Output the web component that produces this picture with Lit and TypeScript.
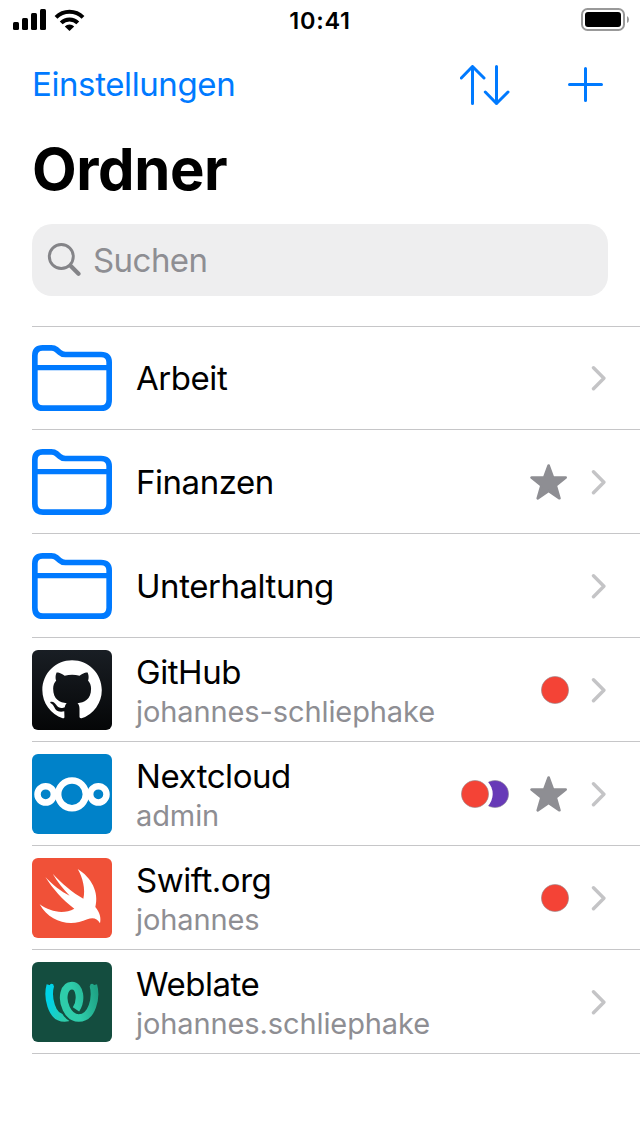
import { LitElement, html, css, svg, nothing } from "lit";
import { customElement, property } from "lit/decorators.js";

type Kind = "folder" | "github" | "nextcloud" | "swift" | "weblate";

interface Entry {
  kind: Kind;
  title: string;
  user?: string;
  tags?: string[];
  starred?: boolean;
}

const RED = "#f44336";
const PURPLE = "#673ab7";

const ENTRIES: Entry[] = [
  { kind: "folder", title: "Arbeit" },
  { kind: "folder", title: "Finanzen", starred: true },
  { kind: "folder", title: "Unterhaltung" },
  { kind: "github", title: "GitHub", user: "johannes-schliephake", tags: [RED] },
  { kind: "nextcloud", title: "Nextcloud", user: "admin", tags: [RED, PURPLE], starred: true },
  { kind: "swift", title: "Swift.org", user: "johannes", tags: [RED] },
  { kind: "weblate", title: "Weblate", user: "johannes.schliephake" },
];

const ART = {
  folder: svg`
    <g fill="none" stroke="#007aff" stroke-width="17" stroke-linejoin="round">
      <path d="M44.5 254V122Q44.5 98.500 68 98.500H94Q103 98.500 109 103.500L119 112Q126 118.500 136 118.500H243Q267.500 118.500 267.500 142V254Q267.500 279.500 243 279.500H69Q44.500 279.500 44.500 254Z"/>
      <path d="M45 158H267" stroke-width="16"/>
    </g>`,
  github: svg`
    <defs><linearGradient id="night" x1="0" y1="0" x2="0" y2="1"><stop offset="0" stop-color="#191e24"/><stop offset="1" stop-color="#050607"/></linearGradient></defs>
    <rect x="24" y="24" width="240" height="240" fill="url(#night)"/>
    <path transform="translate(55 55) scale(11.15)" fill="#fff" d="M8 0C3.58 0 0 3.58 0 8c0 3.54 2.29 6.53 5.47 7.59.28.07.48-.06.48-.34L5.900 13.720C4 14.090 3.470 13.230 3.310 12.780C3.220 12.550 2.830 11.840 2.490 11.650C2.210 11.500 1.810 11.130 2.480 11.120C3.110 11.110 3.560 11.700 3.710 11.940C4.430 13.150 5.580 12.810 6.040 12.600C6.110 12.080 6.320 11.730 6.550 11.530C4.770 11.330 2.910 10.640 2.910 7.580C2.910 6.710 3.220 5.990 3.730 5.430C3.650 5.230 3.370 4.410 3.810 3.310C3.810 3.310 4.480 3.100 6.010 4.130A7.500 7.500 0 0 1 10.010 4.130C11.540 3.090 12.210 3.310 12.210 3.310C12.650 4.410 12.370 5.230 12.290 5.430C12.800 5.990 13.110 6.700 13.110 7.580C13.110 10.650 11.240 11.330 9.460 11.530C9.750 11.780 10 12.260 10 13.010L10 15.210C10 15.460 10.200 15.680 10.560 15.590A8.010 8.010 0 0 0 16 8C16 3.580 12.420 0 8 0Z"/>`,
  nextcloud: svg`
    <rect x="24" y="24" width="240" height="240" fill="#0082c9"/>
    <g fill="none" stroke="#fff" stroke-width="19.5">
      <circle cx="144" cy="145" r="41.5"/><circle cx="65" cy="145" r="24.5"/><circle cx="223" cy="145" r="24.5"/>
    </g>`,
  swift: svg`
    <rect x="24" y="24" width="240" height="240" fill="#f05138"/>
    <path fill="#fff" d="M161 57C202 82 226 127 214 171C227 187 232 203 228 220C219 204 206 202 190 208C138 232 78 217 47 163C80 187 120 193 151 176C116 150 86 116 64 81C85 103 112 126 137 137C119 118 100 95 86 71C112 99 146 128 178 146C185 118 176 82 161 57Z"/>`,
  weblate: svg`
    <defs>
      <linearGradient id="sea" gradientUnits="userSpaceOnUse" x1="66" y1="130" x2="135" y2="170"><stop offset=".2" stop-color="#00d2e6"/><stop offset="1" stop-color="#2eccaa"/></linearGradient>
      <linearGradient id="leaf" gradientUnits="userSpaceOnUse" x1="150" y1="150" x2="222" y2="130"><stop offset=".1" stop-color="#2eccaa"/><stop offset="1" stop-color="#1fa385"/></linearGradient>
    </defs>
    <rect x="24" y="24" width="240" height="240" fill="#144d3f"/>
    <g fill="none" stroke-width="23">
      <path stroke="url(#sea)" d="M79 94C70 126 80 192 122 192Q131 192 138 187"/>
      <path stroke="#144d3f" stroke-width="29" d="M119 150C124 170 134 184 146 190"/>
      <path stroke="url(#leaf)" d="M156 166C174 139 168 95 144 95C119 95 112 134 127 164C137 184 150 192 164 192C205 192 218 130 208 94"/>
    </g>
    <g><circle cx="83" cy="95" r="6" fill="#00d2e6"/><circle cx="204" cy="95" r="6" fill="#21a789"/></g>`,
};

/** Square artwork at the start of a row. */
@customElement("entry-icon")
class EntryIcon extends LitElement {
  @property() kind: Kind = "folder";
  static styles = css`
    :host { display: block; width: 80px; flex: none; }
    svg { display: block; width: 80px; }
    .folder { height: 66px; }
    .tile { height: 80px; border-radius: 6px; }
  `;
  render() {
    const folder = this.kind === "folder";
    return html`<svg class=${folder ? "folder" : "tile"} viewBox=${folder ? "36 90 240 198" : "24 24 240 240"}>${ART[this.kind]}</svg>`;
  }
}

/** One or two overlapping coloured tag dots. */
@customElement("tag-dots")
class TagDots extends LitElement {
  @property({ attribute: false }) colors: string[] = [];
  static styles = css`
    :host { display: block; }
    svg { display: block; height: 28px; }
  `;
  render() {
    const w = 28 + 20 * (this.colors.length - 1);
    const dots = this.colors.map((c, i) => svg`
      <circle cx=${14 + 20 * i} cy="14" r="13.6" fill=${c} stroke="#8e8e93" stroke-opacity=".7" stroke-width=".8"/>`);
    const first = dots.shift();
    return html`<svg width=${w} viewBox="0 0 ${w} 28">
      ${dots}
      ${dots.length ? svg`<circle cx="14" cy="14" r="17.700" fill="#fff"/>` : nothing}
      ${first}
    </svg>`;
  }
}

@customElement("entry-row")
class EntryRow extends LitElement {
  @property({ attribute: false }) entry!: Entry;
  static styles = css`
    :host { display: flex; align-items: center; box-sizing: border-box; height: 104px; margin-left: 32px; padding-right: 33px; border-bottom: 1px solid #c6c6c8; }
    :host(:first-of-type) { box-shadow: inset 0 1px #c6c6c8; }
    .text { flex: 1; margin-left: 24px; white-space: nowrap; }
    .double { padding-top: 3px; }
    .title { font-size: 33px; line-height: 40px; letter-spacing: -0.45px; color: #000; }
    .user { font-size: 29px; line-height: 36px; letter-spacing: -0.1px; color: #8e8e93; margin-top: 2px; }
    .star { display: block; width: 38px; height: 38px; margin-left: 20px; }
    .chevron { display: block; width: 16px; height: 26px; margin-left: 22px; }
    .star + .chevron { margin-left: 24px; }
  `;
  render() {
    const e = this.entry;
    return html`
      <entry-icon .kind=${e.kind}></entry-icon>
      <div class=${e.user ? "text double" : "text"}>
        <div class="title">${e.title}</div>
        ${e.user ? html`<div class="user">${e.user}</div>` : nothing}
      </div>
      ${e.tags ? html`<tag-dots .colors=${e.tags}></tag-dots>` : nothing}
      ${e.starred ? html`<svg class="star" viewBox="0 0 38 38"><path fill="#8e8e93" stroke="#8e8e93" stroke-width="2.6" stroke-linejoin="round" d="M19.600 2.500L24 14.500H36.700L26.800 22.600L30.500 35.300L19.600 28L8.700 35.300L12.400 22.600L2.500 14.500H15.200Z"/></svg>` : nothing}
      <svg class="chevron" viewBox="0 0 16 26"><path fill="none" stroke="#c4c4c6" stroke-width="3.4" stroke-linecap="round" stroke-linejoin="round" d="M2.500 2.700L12.900 13.200L2.500 23.700"/></svg>`;
  }
}

@customElement("app-root")
class AppRoot extends LitElement {
  static styles = css`
    :host { display: block; box-sizing: border-box; width: 640px; height: 1136px; overflow: hidden; background: #fff; font-family: Inter, "Liberation Sans", sans-serif; }
    .status { display: grid; grid-template-columns: 1fr auto 1fr; align-items: center; height: 40px; padding: 0 11px 0 13px; }
    .signals { display: flex; gap: 8px; }
    .signals svg, .battery { display: block; }
    .battery { justify-self: end; }
    .clock { font-size: 23.5px; font-weight: 600; line-height: 38px; letter-spacing: 0.7px; padding: 2px 2px 0 0; }
    .nav { display: flex; align-items: center; height: 88px; padding: 0 36px 0 32px; }
    .settings { flex: 1; color: #007aff; font-size: 33px; line-height: 40px; letter-spacing: -0.4px; }
    .sort { display: block; margin: 1px 56px 0 0; }
    .plus { display: block; margin-top: 2px; }
    h1 { margin: 0; padding-left: 32px; font-size: 58px; font-weight: 700; line-height: 82px; height: 96px; letter-spacing: -0.4px; }
    .search { display: flex; align-items: center; gap: 12px; height: 72px; margin: 0 32px 30px; padding-left: 15px; box-sizing: border-box; border-radius: 20px; background: #eeeeef; color: #8e8e93; font-size: 33px; letter-spacing: -0.55px; }
  `;
  render() {
    return html`
      <div class="status">
        <div class="signals">
          <svg width="33" height="22" viewBox="13 9 33 22"><rect x="13" y="22" width="6" height="8" rx="1.500"/><rect x="22" y="18" width="6" height="12" rx="1.500"/><rect x="31" y="13" width="6" height="17" rx="1.500"/><rect x="40" y="9" width="6" height="21" rx="1.500"/></svg>
          <svg width="31" height="22" viewBox="54 9 31 22">
            <g fill="none" stroke="#000" stroke-width="4"><path d="M56 17.400A19.200 19.200 0 0 1 83 17.400"/><path d="M61.200 22.800A11.800 11.800 0 0 1 77.800 22.800"/></g>
            <path d="M69.500 31L64.800 26.400A6.700 6.700 0 0 1 74.200 26.400Z"/>
          </svg>
        </div>
        <div class="clock">10:41</div>
        <svg class="battery" width="48" height="24" viewBox="581 8 48 24"><rect x="582" y="9" width="42" height="21" rx="5.500" fill="none" stroke="#999" stroke-width="2"/><rect x="585" y="12" width="36" height="15" rx="3"/><path fill="#999" d="M627 16Q629 17 629 19.500T627 23Z"/></svg>
      </div>
      <div class="nav">
        <div class="settings">Einstellungen</div>
        <svg class="sort" width="50" height="40" viewBox="460 65 50 40"><path fill="none" stroke="#007aff" stroke-width="3" stroke-linecap="round" stroke-linejoin="round" d="M472.500 103.500V66.500M461.300 78L472.500 66.500L484 78M496.500 66.500V103.500M485.300 92L496.500 103.500L508 92"/></svg>
        <svg class="plus" width="38" height="36" viewBox="566 67 38 36"><path fill="none" stroke="#007aff" stroke-width="3" stroke-linecap="round" d="M569.500 84.500H601.500M585.500 68.500V100.500"/></svg>
      </div>
      <h1>Ordner</h1>
      <div class="search">
        <svg width="34" height="34" viewBox="47 243 34 34"><g fill="none" stroke="#848488" stroke-linecap="round"><circle cx="61.300" cy="256.500" r="12" stroke-width="2.900"/><path stroke-width="4.200" d="M70.800 266L78.500 273.700"/></g></svg>
        <span>Suchen</span>
      </div>
      <main>${ENTRIES.map((e) => html`<entry-row .entry=${e}></entry-row>`)}</main>`;
  }
}
